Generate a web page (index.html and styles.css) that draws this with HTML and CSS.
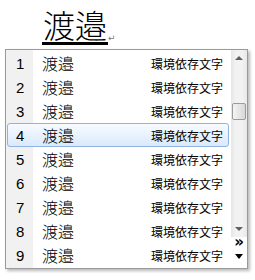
FILE: index.html
```html
<!DOCTYPE html>
<html lang="ja">
<head>
<meta charset="utf-8">
<link rel="stylesheet" href="styles.css">
</head>
<body>
<div class="comp">
  <span class="comp-text">渡邉</span><span class="ret">↵</span>
</div>
<div class="win">
  <div class="list">
    <div class="row"><span class="num">1</span><span class="word">渡邉</span><span class="note">環境依存文字</span></div>
    <div class="row"><span class="num">2</span><span class="word">渡邉</span><span class="note">環境依存文字</span></div>
    <div class="row"><span class="num">3</span><span class="word">渡邉</span><span class="note">環境依存文字</span></div>
    <div class="row sel"><span class="num">4</span><span class="word">渡邉</span><span class="note">環境依存文字</span></div>
    <div class="row"><span class="num">5</span><span class="word">渡邉</span><span class="note">環境依存文字</span></div>
    <div class="row"><span class="num">6</span><span class="word">渡邉</span><span class="note">環境依存文字</span></div>
    <div class="row"><span class="num">7</span><span class="word">渡邉</span><span class="note">環境依存文字</span></div>
    <div class="row"><span class="num">8</span><span class="word">渡邉</span><span class="note">環境依存文字</span></div>
    <div class="row"><span class="num">9</span><span class="word">渡邉</span><span class="note">環境依存文字</span></div>
  </div>
  <div class="side">
    <div class="sb">
      <div class="arrow up"></div>
      <div class="track">
        <div class="thumb"></div>
      </div>
      <div class="arrow down"></div>
    </div>
    <div class="more">»</div>
    <div class="drop"></div>
  </div>
</div>
</body>
</html>
```

FILE: styles.css
```css
html, body {
  margin: 0;
  padding: 0;
  background: #fff;
}
body {
  width: 255px;
  height: 280px;
  overflow: hidden;
  font-family: "Liberation Sans", "Noto Sans CJK JP", sans-serif;
}
.comp {
  height: 49px;
  box-sizing: border-box;
  padding-left: 42px;
  padding-top: 6px;
  display: flex;
  align-items: flex-start;
}
.comp-text {
  font-family: "Noto Sans CJK JP", sans-serif;
  font-weight: 300;
  font-size: 32px;
  line-height: 36px;
  height: 36px;
  padding: 0 1px;
  border-bottom: 3px solid #000;
  color: #000;
}
.ret {
  font-family: "DejaVu Sans", sans-serif;
  font-size: 9px;
  color: #7a7a7a;
  margin-top: 27px;
  margin-left: 0;
}
.win {
  margin-left: 5px;
  width: 243px;
  height: 220px;
  box-sizing: border-box;
  border: 1px solid #9a9a9a;
  background: #fff;
  display: flex;
  box-shadow: 2px 2px 3px rgba(0,0,0,0.28);
}
.list {
  flex: 1;
  padding: 1px 0;
  background: linear-gradient(to right, #f1f1f1 0, #f1f1f1 27px, #fff 27px);
}
.row {
  height: 24px;
  box-sizing: border-box;
  display: flex;
  align-items: center;
  border: 1px solid transparent;
  margin: 0 2px 0 1px;
}
.row.sel {
  border-color: #8fb4e0;
  border-radius: 3px;
  background: linear-gradient(to bottom, #f7fbff 0%, #eaf3fe 45%, #d9e9fc 100%);
}
.num {
  width: 26px;
  padding-left: 8px;
  box-sizing: border-box;
  font-size: 15px;
  color: #000;
}
.word {
  font-family: "Noto Sans CJK JP", sans-serif;
  font-weight: 300;
  font-size: 16px;
  margin-left: 8px;
  flex: 1;
}
.note {
  font-family: "Noto Sans CJK JP", sans-serif;
  font-size: 12px;
  margin-right: 5px;
}
.side {
  width: 16px;
  display: flex;
  flex-direction: column;
}
.sb {
  height: 187px;
  background: linear-gradient(to right, #e6e6e6, #f2f2f2 30%, #f2f2f2 70%, #e8e8e8);
  display: flex;
  flex-direction: column;
}
.arrow {
  height: 16px;
  display: flex;
  align-items: center;
  justify-content: center;
}
.arrow::before {
  content: "";
  width: 0;
  height: 0;
  border-left: 4px solid transparent;
  border-right: 4px solid transparent;
}
.arrow.up::before {
  border-bottom: 4px solid #606060;
}
.arrow.down::before {
  border-top: 4px solid #606060;
}
.track {
  flex: 1;
  padding-top: 37px;
}
.thumb {
  height: 15px;
  margin: 0 1px;
  border: 1px solid #9b9b9b;
  border-radius: 2px;
  background: linear-gradient(to right, #f4f4f4, #e6e6e6 50%, #d8d8d8);
}
.more {
  height: 14px;
  font-family: "DejaVu Sans", sans-serif;
  font-weight: bold;
  font-size: 15px;
  line-height: 10px;
  text-align: center;
  color: #000;
}
.drop {
  flex: 1;
  display: flex;
  align-items: center;
  justify-content: center;
  padding-bottom: 6px;
}
.drop::before {
  content: "";
  width: 0;
  height: 0;
  border-left: 4px solid transparent;
  border-right: 4px solid transparent;
  border-top: 5px solid #000;
}
```
